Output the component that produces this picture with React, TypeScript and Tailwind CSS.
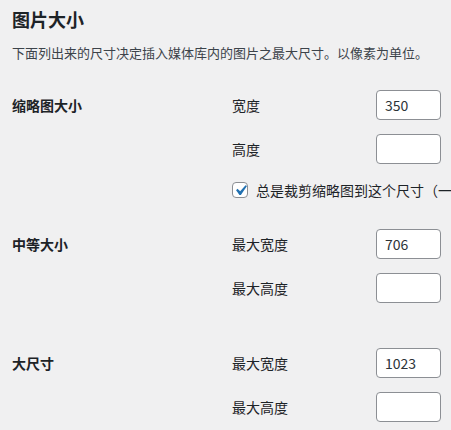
// 媒体设置 - 图片大小
import React from 'react';

const font = { fontFamily: '"Noto Sans CJK SC", "Noto Sans", sans-serif' };

function SizeInput({ value }: { value?: string }) {
  return (
    <input
      type="text"
      defaultValue={value}
      className="w-[65px] h-[30px] px-2 bg-white border border-[#8c8f94] rounded text-[14px] text-[#2c3338] outline-none"
    />
  );
}

function Field({ label, value }: { label: string; value?: string }) {
  return (
    <div className="flex items-center h-[30px]">
      <span className="w-[144px] text-[14px] text-[#1d2327]">{label}</span>
      <SizeInput value={value} />
    </div>
  );
}

function Section({ title, children, className }: { title: string; children: React.ReactNode; className?: string }) {
  return (
    <div className={`flex ${className ?? ''}`}>
      <div className="w-[220px] h-[30px] flex items-center shrink-0">
        <span className="text-[14px] font-bold text-[#1d2327]">{title}</span>
      </div>
      <div className="flex flex-col gap-[14px]">{children}</div>
    </div>
  );
}

export default function App() {
  return (
    <div className="min-h-screen w-[451px] h-[430px] overflow-hidden bg-[#f0f0f1] px-3 pt-[7px]" style={font}>
      <h2 className="text-[18px] font-bold leading-[24px] text-[#1d2327]">图片大小</h2>
      <p className="mt-[12px] text-[13px] leading-[20px] text-[#3c434a] whitespace-nowrap">
        下面列出来的尺寸决定插入媒体库内的图片之最大尺寸。以像素为单位。
      </p>

      <Section title="缩略图大小" className="mt-[27px]">
        <Field label="宽度" value="350" />
        <Field label="高度" />
        {/* 复选框 */}
        <label className="flex items-center gap-[8px] mt-[4px] h-[16px] whitespace-nowrap text-[14px] text-[#1d2327]">
          <span className="w-4 h-4 shrink-0 bg-white border border-[#8c8f94] rounded flex items-center justify-center overflow-visible">
            <svg viewBox="0 0 20 20" className="w-[21px] h-[21px] shrink-0 -m-[3px]">
              <path d="M14.83 4.89l1.34.94-5.81 8.38H9.02L5.78 9.67l1.34-1.25 2.57 2.4z" fill="#2271b1" />
            </svg>
          </span>
          总是裁剪缩略图到这个尺寸（一般情况下，缩略图应是成比例的）
        </label>
      </Section>

      <Section title="中等大小" className="mt-[31px]">
        <Field label="最大宽度" value="706" />
        <Field label="最大高度" />
      </Section>

      <Section title="大尺寸" className="mt-[45px]">
        <Field label="最大宽度" value="1023" />
        <Field label="最大高度" />
      </Section>
    </div>
  );
}
